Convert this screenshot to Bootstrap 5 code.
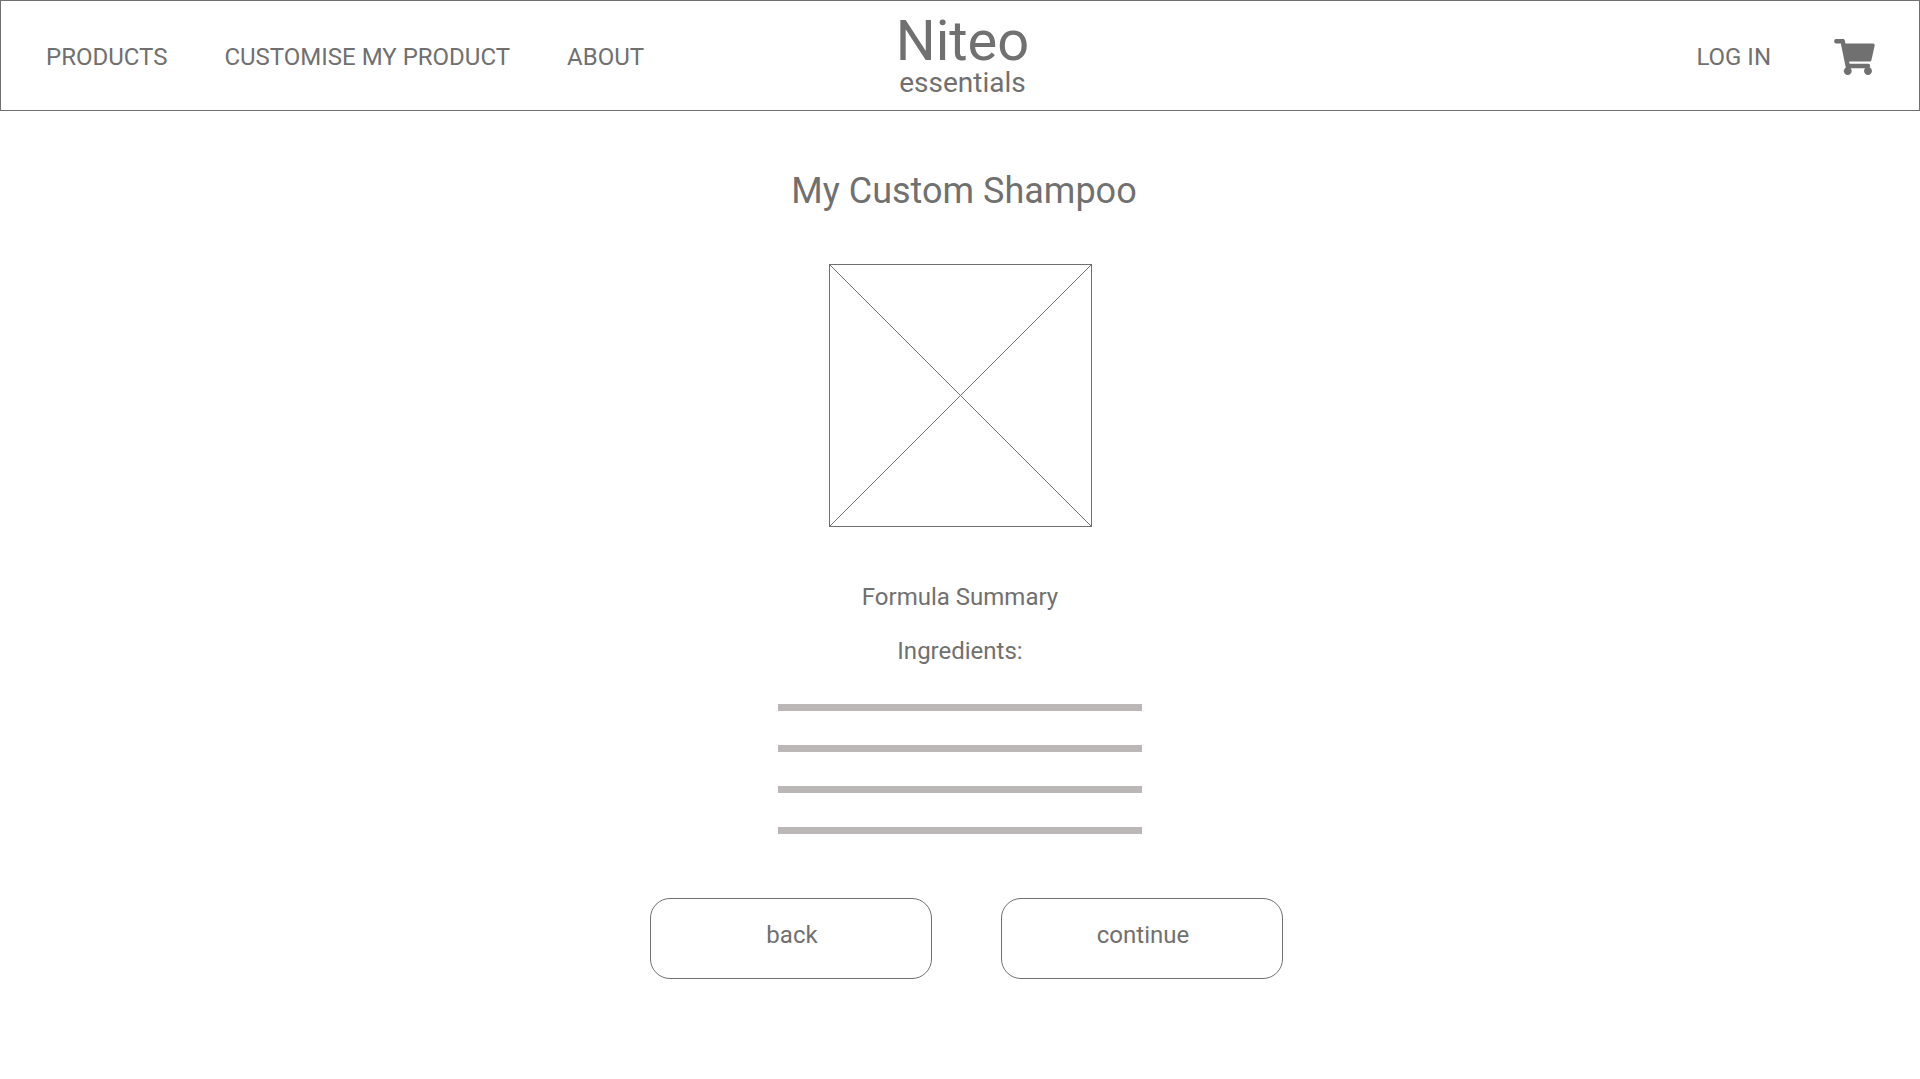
<!DOCTYPE html>
<html lang="en">
<head>
<meta charset="utf-8">
<meta name="viewport" content="width=device-width, initial-scale=1">
<title>Niteo essentials - My Custom Shampoo</title>
<link href="https://cdn.jsdelivr.net/npm/bootstrap@5.3.0/dist/css/bootstrap.min.css" rel="stylesheet">
<style>
  :root { --ink: #707070; }
  body { font-family: Roboto, sans-serif; font-size: 24px; line-height: 28px; color: var(--ink); background: #fff; }
  a { color: inherit; text-decoration: none; }
  .site-bar { border: 1px solid var(--ink); padding: 12px 44px 13px 45px; background: #fff; }
  .bar-side { flex: 1 1 0; padding-top: 4px; }
  .bar-links { gap: 57px; }
  .bar-account { gap: 63px; }
  .brand-name { font-size: 56px; line-height: 56px; }
  .brand-sub { font-size: 28px; line-height: 28px; }
  .cart-icon { width: 41px; height: 36px; }
  main { padding: 59px 16px; }
  .page-title { font-size: 36px; line-height: 42px; font-weight: 400; margin-bottom: 52px; }
  .product-image { width: 263px; height: 263px; margin-bottom: 56px; stroke: var(--ink); }
  .summary-title { font-size: 24px; line-height: 28px; font-weight: 400; margin-bottom: 26px; }
  .ingredient-list { width: 100%; max-width: 364px; gap: 34px; margin: 13px 0 64px; }
  .ingredient-list li { height: 7px; background: #bbb7b7; }
  .action-row { gap: 69px; padding-left: 12px; }
  .btn-outline-ink {
    --bs-btn-color: var(--ink); --bs-btn-border-color: var(--ink); --bs-btn-bg: #fff;
    --bs-btn-hover-color: #fff; --bs-btn-hover-bg: var(--ink);
    --bs-btn-font-size: 24px; --bs-btn-line-height: 28px; --bs-btn-border-radius: 20px;
    width: 282px; padding: 22px 12px 29px 15px;
  }
</style>
</head>
<body>
<header class="site-bar d-flex align-items-center">
  <nav class="bar-side bar-links d-flex" aria-label="Main">
    <a href="#">PRODUCTS</a>
    <a href="#">CUSTOMISE MY PRODUCT</a>
    <a href="#">ABOUT</a>
  </nav>
  <a class="d-flex flex-column align-items-center ps-1" href="#">
    <span class="brand-name">Niteo</span>
    <span class="brand-sub">essentials</span>
  </a>
  <div class="bar-side bar-account d-flex justify-content-end align-items-center">
    <a href="#">LOG IN</a>
    <a class="d-flex" href="#" aria-label="Cart">
      <svg class="cart-icon" viewBox="0 0 576 512" fill="currentColor" aria-hidden="true"><path d="M528.12 301.319l47.273-208C578.806 78.301 567.391 64 551.99 64H159.208l-9.166-44.81C147.758 8.021 137.93 0 126.529 0H24C10.745 0 0 10.745 0 24v16c0 13.255 10.745 24 24 24h69.883l70.248 343.435C147.325 417.1 136 435.222 136 456c0 30.928 25.072 56 56 56s56-25.072 56-56c0-15.674-6.447-29.835-16.824-40h209.647C430.447 426.165 424 440.326 424 456c0 30.928 25.072 56 56 56s56-25.072 56-56c0-22.172-12.888-41.332-31.579-50.405l5.517-24.276c3.413-15.018-8.002-29.319-23.403-29.319H218.117l-6.545-32h293.145c11.206 0 20.92-7.754 23.403-18.681z"/></svg>
    </a>
  </div>
</header>
<main class="d-flex flex-column align-items-center">
  <h1 class="page-title ps-2">My Custom Shampoo</h1>
  <svg class="product-image" viewBox="0 0 263 263" fill="none" role="img" aria-label="Product image"><path d="M.5 .5H262.5V262.5H.5ZM0 0L263 263M263 0L0 263"/></svg>
  <h2 class="summary-title">Formula Summary</h2>
  <h3 class="summary-title">Ingredients:</h3>
  <ul class="ingredient-list list-unstyled d-flex flex-column">
    <li></li>
    <li></li>
    <li></li>
    <li></li>
  </ul>
  <div class="action-row d-flex flex-wrap justify-content-center">
    <button type="button" class="btn btn-outline-ink">back</button>
    <button type="button" class="btn btn-outline-ink">continue</button>
  </div>
</main>
<script src="https://cdn.jsdelivr.net/npm/bootstrap@5.3.0/dist/js/bootstrap.bundle.min.js"></script>
</body>
</html>
